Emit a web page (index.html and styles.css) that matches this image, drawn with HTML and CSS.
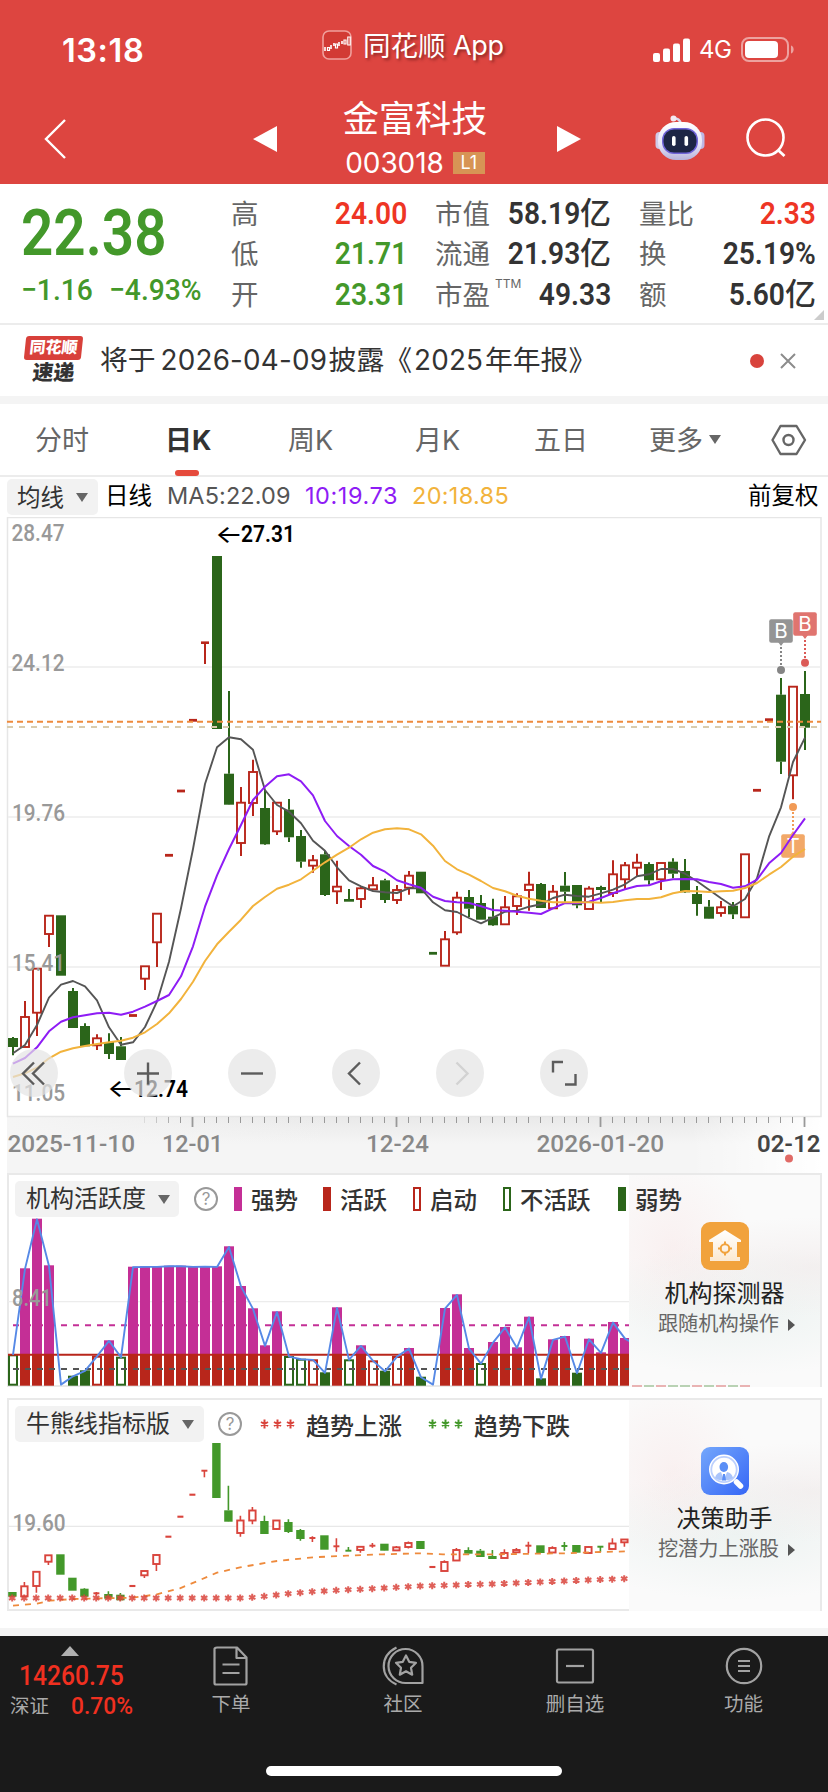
FILE: index.html
```html
<!DOCTYPE html>
<html lang="zh-CN">
<head>
<meta charset="utf-8">
<title>金富科技 003018</title>
<link rel="stylesheet" href="styles.css">
</head>
<body>
<div class="app">
  <header class="top">
    <div class="status">
      <div class="clock">13:18</div>
      <div class="brand">
        <svg width="30" height="30" viewBox="0 0 30 30"><rect x="1" y="1" width="28" height="28" rx="6" fill="#d23a34" stroke="#f0a09c" stroke-width="1.6"/><g stroke="#fff" stroke-width="1.6"><path d="M3 17v4M9 15v4M12 13v3M17 12v4M20 11v3"/></g><g fill="none" stroke="#fff" stroke-width="1.200"><path d="M5.500 17.500h2v3h-2zM13.500 14h2v4h-2zM22 10h2v4h-2zM25.800 7h2.400v8h-2.400z"/></g></svg>
        <span class="brand-cn">同花顺</span><span class="brand-en">App</span>
      </div>
      <div class="signal">
        <svg width="38" height="24" viewBox="0 0 38 24" fill="#fff"><rect x="0" y="15" width="7" height="9" rx="2"/><rect x="10" y="10.500" width="7" height="13.500" rx="2"/><rect x="20" y="5.500" width="7" height="18.500" rx="2"/><rect x="30" y="0.500" width="7" height="23.500" rx="2"/></svg>
        <span class="net">4G</span>
        <svg width="54" height="26" viewBox="0 0 54 26"><rect x="1" y="1" width="46" height="23" rx="7" fill="none" stroke="#eda29f" stroke-width="2"/><rect x="4" y="4" width="33" height="17" rx="4" fill="#fff"/><path d="M50 8.500c3.500 1 3.500 7 0 8z" fill="#eda29f"/></svg>
      </div>
    </div>
    <div class="nav">
      <svg class="back" width="24" height="42" viewBox="0 0 24 42"><path d="M22 2L3 21l19 19" fill="none" stroke="#fff" stroke-width="2.400"/></svg>
      <svg class="prev" width="24" height="26" viewBox="0 0 24 26"><path d="M24 0v26L0 13z" fill="#fff"/></svg>
      <div class="title">
        <div class="name">金富科技</div>
        <div class="code"><span>003018</span><b>L1</b></div>
      </div>
      <svg class="next" width="24" height="26" viewBox="0 0 24 26"><path d="M0 0v26l24-13z" fill="#fff"/></svg>
      <svg class="robot" width="50" height="46" viewBox="0 0 50 46">
        <defs><linearGradient id="rb" x1="0" y1="0" x2="0" y2="1"><stop offset="0" stop-color="#fff"/><stop offset=".6" stop-color="#e6e4f6"/><stop offset="1" stop-color="#b7b3dc"/></linearGradient></defs>
        <path d="M17 3.500q7-1 9 5" fill="none" stroke="#dcd9ee" stroke-width="2.500"/><circle cx="18.500" cy="3.500" r="3" fill="#f3e9f2"/>
        <rect x="0.500" y="17" width="8" height="17" rx="4" fill="#cfcbe9"/><rect x="41.500" y="17" width="8" height="17" rx="4" fill="#bdb7e4"/>
        <rect x="3" y="7" width="44" height="38" rx="18" fill="url(#rb)"/>
        <rect x="7" y="13" width="36" height="26" rx="12" fill="#6f63d8"/><rect x="8.500" y="14.500" width="33" height="23" rx="10.500" fill="#1d2545"/>
        <rect x="17" y="21" width="3.600" height="10" rx="1.800" fill="#fff"/><rect x="29.500" y="21" width="3.600" height="10" rx="1.800" fill="#fff"/>
      </svg>
      <svg class="search" width="44" height="44" viewBox="0 0 44 44"><circle cx="20.500" cy="20.500" r="18" fill="none" stroke="#fff" stroke-width="2.600"/><path d="M33 33l6.500 6" stroke="#fff" stroke-width="2.800"/></svg>
    </div>
  </header>

  <section class="quote">
    <div class="price-col">
      <div class="price"><span class="din">22.38</span></div>
      <div class="change"><span class="din chg">−1.16</span><span class="din pct">−4.93%</span></div>
    </div>
    <dl class="stats s1">
      <dt>高</dt><dd class="up"><span class="din">24.00</span></dd>
      <dt>低</dt><dd class="down"><span class="din">21.71</span></dd>
      <dt>开</dt><dd class="down"><span class="din">23.31</span></dd>
    </dl>
    <dl class="stats s2">
      <dt>市值</dt><dd><span class="din">58.19</span>亿</dd>
      <dt>流通</dt><dd><span class="din">21.93</span>亿</dd>
      <dt>市盈<sup>TTM</sup></dt><dd><span class="din">49.33</span></dd>
    </dl>
    <dl class="stats s3">
      <dt>量比</dt><dd class="up"><span class="din">2.33</span></dd>
      <dt>换</dt><dd><span class="din">25.19%</span></dd>
      <dt>额</dt><dd><span class="din">5.60</span>亿</dd>
    </dl>
    <i class="corner"></i>
  </section>

  <section class="news">
    <div class="express"><span class="ex-top">同花顺</span><span class="ex-bottom">速递</span></div>
    <div class="headline">将于<span class="n1">2026-04-09</span>披露《<span class="n2">2025</span>年年报》</div>
    <i class="dot"></i>
    <svg width="16" height="16" viewBox="0 0 16 16"><path d="M1 1l14 14M15 1L1 15" stroke="#8c8c8c" stroke-width="2"/></svg>
  </section>

  <nav class="tabs">
    <span class="t1">分时</span><span class="t2 on">日K</span><span class="t3">周K</span><span class="t4">月K</span><span class="t5">五日</span><span class="t6">更多<i class="tri"></i></span>
    <svg width="36" height="32" viewBox="0 0 36 32"><path d="M9.500 2h16l8.500 14-8.500 14h-16L1.500 16z" fill="none" stroke="#666" stroke-width="2.400" stroke-linejoin="round"/><circle cx="17.500" cy="16" r="5" fill="none" stroke="#666" stroke-width="2.400"/></svg>
  </nav>

  <div class="ma-row">
    <span class="pick ma-pick">均线<i class="tri"></i></span>
    <span class="period">日线</span>
    <span class="ma5">MA5:22.09</span><span class="ma10">10:19.73</span><span class="ma20">20:18.85</span>
    <span class="adjust">前复权</span>
  </div>

  <svg id="kline" width="828" height="656" viewBox="0 517 828 656"></svg>

  <section class="panel">
    <div class="panel-head">
      <span class="pick p1">机构活跃度<i class="tri"></i></span>
      <span class="help">?</span>
      <span class="lg" style="width:89px"><i class="sw magenta"></i>强势</span>
      <span class="lg" style="width:90px"><i class="sw red"></i>活跃</span>
      <span class="lg" style="width:90px"><i class="sw red-line"></i>启动</span>
      <span class="lg" style="width:115px"><i class="sw green-line"></i>不活跃</span>
      <span class="lg"><i class="sw green"></i>弱势</span>
    </div>
    <svg id="activity" class="plot" width="621" height="169" viewBox="8 1218 621 169"></svg>
    <aside class="promo">
      <svg width="48" height="48" viewBox="0 0 48 48"><defs><linearGradient id="hs" x1="0" y1="0" x2="0" y2="1"><stop offset="0" stop-color="#fff"/><stop offset="1" stop-color="#fbe9d2"/></linearGradient></defs><rect width="48" height="48" rx="9" fill="#f1a23c"/><path d="M24 8l16 10v2h-4v15h3v4H9v-4h3V20H8v-2z" fill="url(#hs)"/><circle cx="24" cy="26.500" r="4.300" fill="none" stroke="#f1a23c" stroke-width="2"/><path d="M24 19.500v3.500M24 30v3.500M17 26.500h3.500M27.500 26.500H31" stroke="#f1a23c" stroke-width="2"/></svg>
      <strong>机构探测器</strong>
      <span>跟随机构操作<i class="go"></i></span>
      <svg class="tails" width="120" height="2" viewBox="0 0 120 2"><g fill="#e9b3b3"><path d="M0 0h10v2H0zM24 0h10v2H24zM60 0h10v2H60zM84 0h10v2H84zM108 0h10v2h-10z"/></g><g fill="#b9d2b4"><path d="M12 0h10v2H12zM36 0h10v2H36zM48 0h10v2H48zM72 0h10v2H72zM96 0h10v2H96z"/></g></svg>
    </aside>
  </section>

  <section class="panel bull">
    <div class="panel-head">
      <span class="pick p2">牛熊线指标版<i class="tri"></i></span>
      <span class="help">?</span>
      <span class="lg trend"><svg class="stars" width="36" height="12" viewBox="0 0 36 12"><g stroke="#d9443c" stroke-width="2"><path d="M4.500 1.500v9M1 4l7 4M8 4L1 8M17.500 1.500v9M14 4l7 4M21 4l-7 4M30.500 1.500v9M27 4l7 4M34 4l-7 4"/></g></svg>趋势上涨</span>
      <span class="lg"><svg class="stars" width="36" height="12" viewBox="0 0 36 12"><g stroke="#43982a" stroke-width="2"><path d="M4.500 1.500v9M1 4l7 4M8 4L1 8M17.500 1.500v9M14 4l7 4M21 4l-7 4M30.500 1.500v9M27 4l7 4M34 4l-7 4"/></g></svg>趋势下跌</span>
    </div>
    <svg id="trend" class="plot" width="621" height="168" viewBox="8 1443 621 168"></svg>
    <aside class="promo">
      <svg width="48" height="48" viewBox="0 0 48 48"><defs><linearGradient id="bl" x1="0" y1="0" x2="1" y2="1"><stop offset="0" stop-color="#74a7fb"/><stop offset="1" stop-color="#3566f6"/></linearGradient></defs><rect width="48" height="48" rx="9" fill="url(#bl)"/><path d="M35.500 35l4 4" stroke="#fff" stroke-width="5.500" stroke-linecap="round"/><circle cx="23" cy="22.500" r="15" fill="#fff"/><circle cx="23" cy="22.500" r="12.700" fill="#fff" stroke="#bcd0fd" stroke-width="1.800"/><ellipse cx="22.800" cy="20" rx="4.300" ry="5" fill="#5b8ff6"/><path d="M14 31q1-5 6-6l3 8q-5 1-9-2zM32 31q-1-5-6-6l-3 8q5 1 9-2z" fill="#a9c4fb"/><path d="M22 27h2l1 6.500h-4z" fill="#5b8ff6"/></svg>
      <strong>决策助手</strong>
      <span>挖潜力上涨股<i class="go"></i></span>
    </aside>
  </section>

  <footer class="bottom">
    <div class="bar">
      <div class="index">
        <i class="uptri"></i>
        <div class="idx-val"><span class="din">14260.75</span></div>
        <div class="idx-row"><span>深证</span><span class="din idx-pct">0.70%</span></div>
      </div>
      <div class="item i1"><svg width="36" height="40" viewBox="0 0 36 40"><path d="M4 1.500h20l9.500 10V37q0 1.500-1.500 1.500H3Q1.500 38.500 1.500 37V3q0-1.500 2.500-1.500zM23.500 1.500v10.500h10M9.500 18.500h17M9.500 27h17"/></svg>下单</div>
      <div class="item i2"><svg width="42" height="40" viewBox="0 0 42 40"><path d="M14.500 1.500C-2.500 10-2.500 31 14.500 38.500M40.500 37V20.500A17 17 0 1 0 24 37zM24 9.500l3.200 6.300 6.800 1-5 4.900 1.200 7L24 25.300l-6.200 3.400 1.200-7-5-4.900 6.800-1z"/></svg>社区</div>
      <div class="item i3"><svg width="40" height="40" viewBox="0 0 40 40"><rect x="2" y="3.500" width="36" height="33" rx="1.500"/><path d="M11 20h18"/></svg>删自选</div>
      <div class="item i4"><svg width="38" height="40" viewBox="0 0 38 40"><circle cx="19" cy="20" r="17.200"/><path d="M13 15h12M13 20h12M13 25h12"/></svg>功能</div>
    </div>
    <i class="home"></i>
  </footer>
</div>
<script src="charts.js"></script>
</body>
</html>
```
FILE: styles.css
```css
* { box-sizing: border-box; }
body { margin: 0; background: #fff; font-family: Inter, "Noto Sans CJK SC", sans-serif; color: #333; }
.app { width: 828px; height: 1792px; display: flex; flex-direction: column; overflow: hidden; }
.app > * { flex: none; }
svg { display: block; flex: none; }
i { font-style: normal; flex: none; }
.din { display: inline-block; font-family: Roboto, sans-serif; font-weight: 600; transform: scaleX(.88); transform-origin: right center; white-space: nowrap; }
.tri { display: inline-block; border: 6.500px solid transparent; border-top: 9px solid #666; border-bottom: 0; }

.top { height: 184px; background: #dd4540; color: #fff; }
.status { height: 92px; display: flex; align-items: flex-start; white-space: nowrap; }
.clock { width: 322px; padding: 31px 0 0 62px; font-size: 32.500px; line-height: 40px; font-weight: 600; letter-spacing: .6px; }
.brand { width: 331px; padding-top: 30px; display: flex; font-size: 27.500px; line-height: 32px; text-shadow: 2px 2px 3px rgba(90,20,20,.6); }
.brand-cn { margin-left: 11px; width: 90px; }
.brand-en { font-size: 27px; letter-spacing: -.3px; }
.signal { display: flex; padding-top: 37px; align-items: center; }
.net { width: 50px; padding-left: 8px; font-size: 24px; line-height: 24px; letter-spacing: -.5px; }
.nav { height: 92px; display: flex; }
.back { margin: 26px 0 0 43px; }
.prev { margin: 34px 0 0 186px; }
.title { width: 276px; margin-right: 4px; text-align: center; }
.name { padding-top: 4px; font-size: 36.200px; line-height: 46px; }
.code { display: flex; justify-content: center; align-items: center; font-size: 28px; line-height: 36px; margin-top: 3px; letter-spacing: -.1px; }
.code b { margin-left: 9px; width: 32px; height: 22px; background: #d79455; font-size: 18px; line-height: 22px; font-weight: 400; }
.next { margin-top: 34px; }
.robot { margin: 23px 0 0 74px; }
.search { margin: 25px 0 0 40px; }

.quote { height: 141px; border-bottom: 2px solid #ececec; display: flex; position: relative; padding-top: 9px; }
.price-col { width: 231px; padding-left: 21px; color: #43982a; }
.price { height: 76px; font-size: 64px; line-height: 77px; }
.price .din { transform-origin: left center; transform: scaleX(.885); }
.change { display: flex; font-size: 30px; line-height: 42px; }
.change .din { transform-origin: left center; transform: scaleX(.94); font-weight: 500; }
.chg { width: 88px; }
.stats { margin: 0; display: grid; grid-template-columns: 56px 1fr; grid-auto-rows: 40.300px; line-height: 40px; white-space: nowrap; }
.stats dt { font-size: 27.500px; color: #666; padding-top: 1px; }
.stats dd { margin: 0; font-size: 31px; text-align: right; font-weight: 500; }
.stats .din { font-size: 32px; }
.stats sup { font-size: 12px; line-height: 12px; vertical-align: 17px; margin-left: 5px; }
.s1 { width: 176px; }
.s2 { width: 176px; margin-left: 28px; }
.s3 { width: 177px; margin-left: 28px; }
.up { color: #ee3524; }
.down { color: #43982a; }
.corner { position: absolute; right: 4px; bottom: 3px; border: solid transparent; border-width: 10px 0 0 10px; border-bottom: 10px solid #ccc; border-top: 0; }

.news { height: 79px; border-bottom: 8px solid #f4f4f4; display: flex; align-items: center; }
.express { margin-left: 25px; width: 75px; font-weight: 900; text-align: center; }
.express span { display: block; width: 57px; transform: skewX(-6deg); white-space: nowrap; }
.ex-top { height: 24px; background: #d8403a; border-radius: 3px; color: #fff; font-size: 16px; line-height: 23px; }
.ex-bottom { font-size: 21px; line-height: 26px; }
.headline { width: 650px; font-size: 27.800px; line-height: 40px; white-space: nowrap; margin-top: -2px; }
.headline span { display: inline-block; letter-spacing: .2px; margin-left: 5px; }
.n1 { width: 168px; }
.n2 { width: 71px; }
.headline .n2 { margin-left: 2px; }
.dot { width: 14px; height: 14px; border-radius: 50%; background: #d8433c; margin-right: 16px; }

.tabs { height: 73px; border-bottom: 2px solid #ececec; display: flex; align-items: center; color: #666; font-size: 27px; position: relative; }
.tabs span { line-height: 73px; height: 72px; white-space: nowrap; }
.t1 { width: 165px; padding-left: 35px; }
.t2 { width: 123px; }
.tabs .on { color: #333; font-weight: 700; position: relative; }
.on::after { content: ""; position: absolute; left: 10px; bottom: 0; width: 24px; height: 6px; border-radius: 3px; background: #e54a3c; }
.t3 { width: 127px; }
.t4 { width: 119px; }
.t5 { width: 115px; }
.t6 { width: 122px; }
.t6 .tri { margin: 0 0 6px 6px; }

.ma-row { height: 40px; display: flex; align-items: center; padding-left: 7px; font-size: 23.500px; color: #000; white-space: nowrap; }
.ma-row > span { line-height: 34px; padding-bottom: 2px; }
.pick { display: flex; align-items: center; height: 36px; background: #f2f2f2; border-radius: 5px; padding-left: 11px; color: #333; line-height: 36px; }
.pick .tri { margin-left: 12px; }
.ma-row .ma-pick { width: 91px; padding: 1px 0 0 10px; line-height: 36px; }
.period { width: 69px; padding-left: 7px; }
.ma5 { width: 138px; color: #555; letter-spacing: .1px; }
.ma10 { width: 107px; color: #8e1cf5; letter-spacing: .55px; }
.ma20 { width: 336px; color: #f2b33c; letter-spacing: .3px; }

.panel { margin-left: 7px; width: 815px; height: 214px; border: 2px solid #e9e9e9; display: grid; grid-template-columns: 621px 1fr; grid-template-rows: 43px 1fr; }
.panel > * { min-width: 0; min-height: 0; }
.bull { margin-top: 11px; height: 213px; margin-bottom: 17px; }
.panel-head { grid-area: 1 / 1 / 2 / 3; z-index: 1; display: flex; align-items: center; padding: 5px 0 0 6px; font-size: 23.500px; white-space: nowrap; }
.panel-head .pick { font-size: 24px; }
.p1 { width: 164px; }
.p2 { width: 189px; }
.help { width: 24px; height: 24px; border: 2px solid #999; border-radius: 50%; margin: 0 16px 0 15px; font-size: 17px; line-height: 20px; text-align: center; color: #999; }
.bull .help { margin: 0 18px 0 14px; }
.lg { display: flex; align-items: center; font-weight: 500; color: #333; }
.sw { width: 8px; height: 24px; margin-right: 9px; }
.magenta { background: #c42f96; }
.red { background: #b8261b; }
.green { background: #2b651a; }
.red-line { border: 2px solid #b8261b; }
.green-line { border: 2px solid #2b651a; }
.stars { margin-right: 10px; }
.trend { width: 168px; }
.bull .lg { font-size: 24px; }
.plot { grid-area: 2 / 1; margin-left: -1px; }
.promo { grid-area: 1 / 2 / 3 / 3; margin-left: -1px; background: radial-gradient(ellipse 80px 90px at 42px 72px, rgba(248,226,226,.4), rgba(248,226,226,0)), radial-gradient(ellipse 170px 50px at 185px 92px, rgba(238,230,230,.5), rgba(238,230,230,0)), radial-gradient(ellipse 180px 65px at 110px 135px, rgba(232,240,238,.7), rgba(232,240,238,0)), #fafafa; display: flex; flex-direction: column; align-items: center; padding-top: 47px; }
.promo strong { font-size: 24px; line-height: 30px; font-weight: 400; color: #222; margin-top: 9px; }
.promo span { font-size: 20.200px; line-height: 28px; color: #666; margin-top: 1px; padding-left: 4px; white-space: nowrap; }
.go { display: inline-block; border: 6px solid transparent; border-left: 7px solid #555; border-right: 0; margin-left: 9px; }
.tails { margin-top: auto; align-self: flex-start; margin-left: 3px; }

.bottom { height: 164px; border-top: 8px solid #f4f4f4; background: #1a1a1a; color: #aaa; display: flex; flex-direction: column; align-items: center; justify-content: space-between; padding-bottom: 16px; }
.bar { width: 828px; display: flex; font-size: 19.500px; white-space: nowrap; }
.index { width: 145px; display: flex; flex-direction: column; align-items: flex-start; padding-top: 10px; }
.uptri { border: 9px solid transparent; border-top: 0; border-bottom: 10px solid #b0b0b0; margin-left: 61px; }
.index .din { color: #f03020; transform-origin: left center; font-weight: 500; }
.idx-val { padding-left: 19px; font-size: 28px; line-height: 38px; height: 38px; }
.idx-row { display: flex; align-items: center; height: 24px; line-height: 24px; padding-left: 10px; }
.idx-row .idx-pct { margin-left: 22px; font-size: 24.500px; line-height: 22px; transform: scaleX(.93); }
.item { width: 172px; display: flex; flex-direction: column; align-items: center; padding-top: 10px; line-height: 28px; }
.item svg { fill: none; stroke: #a2a2a2; stroke-width: 2.200; stroke-linejoin: round; margin-bottom: 4px; }
.i4 { width: 165px; }
.home { width: 296px; height: 10px; border-radius: 5px; background: #fff; }
```
FILE: charts.js
```js
(function () {
  var STEP = 12, RED = '#b8261b', GREEN = '#2b651a';

  // Rows: colour, high, open/close top, open/close bottom, low. One number means a flat day.
  var K = [
    ['g',1037,1038,1047,1055.3],['r',1001,1017,1047,1047],['r',968.7,968.7,1012.7,1036],['r',915.7,915.7,934,947],
    ['g',915.3,915.3,975.7,975.7],['g',988,991,1028,1028],['g',1023.3,1026,1046.3,1046.3],['r',1034.3,1038.3,1045.3,1050],
    ['g',1033.3,1042,1054,1059],['g',1037,1046.3,1060,1060],['r',1015.5],['r',966.3,966.3,978.7,990],
    ['r',913.7,913.7,942.3,967],['r',855.3],['r',791],['r',720.3],
    ['r',642.7,642.7,642.7,664],['g',556,556,729,729],['g',691,773.7,804.7,805],['r',787,802.7,843,856],
    ['r',759.7,772,803,816],['g',790,808,844.3,845],['r',802.7,802.7,831.3,835],['g',799,809.7,837.3,842],
    ['g',830,836,861.7,867.7],['r',855,860.3,865.7,872.7],['g',851,854.3,895,896],['r',860.7,886.7,891.3,904],
    ['g',889,899,901.7,901.7],['r',886.7,888.3,899,908],['r',877,885.3,889.3,890],['g',878.7,880.3,900,903],
    ['r',885,890,900,904],['r',871,875.7,887.7,894.7],['g',871.7,871.7,893.3,893.3],['g',953.3],
    ['r',931,939.3,965.7,965.7],['r',891.7,897.7,932.3,934.7],['g',890,897,908.7,917],['g',895,903,919.7,919.7],
    ['g',898.7,916.7,925.3,926],['r',896,907.3,924.3,924.3],['r',893.3,896.3,906,915],['r',871.7,884.7,890,910.7],
    ['g',883,884,908,908],['r',885,891.7,908.3,908.3],['g',872,885.7,891.7,901.7],['g',885,885,905.3,908.3],
    ['r',886.3,888.7,909,909],['g',885.7,887,890,903],['r',860.3,874.3,893,897],['r',862,865.3,879.3,889.7],
    ['r',853.7,862.7,867.7,876.7],['g',862.3,864,880.3,884.7],['r',863,863,879.3,890],['g',858.3,861.7,873.7,878.3],
    ['g',859,871,892.3,893],['g',886,894,904,915.7],['g',900,906.7,918.7,919],['r',901,907.3,913,916.7],
    ['g',902,905.7,914.3,919],['r',854.3,854.3,917.3,917.3],['r',790.3],['r',719.7],
    ['g',678,694.7,761.7,774],['r',686.7,686.7,775.3,799.3],['g',671,694,727.7,750]
  ];
  var MA5 = [1053.3,1045,1025,997.7,984.7,981,986.3,1000.3,1027.3,1044.7,1042.3,1027,1001.7,961.7,908.3,849,784,747.3,737.3,739.3,749.7,790,805,811.7,823.3,840.7,850.7,867.3,880.3,886.3,891,892.3,893,888.3,888.3,902.3,910.3,912,918,923.3,917.7,911.7,910.7,906.7,904.3,898,894.7,896,896.7,893.3,889.7,884.3,876.3,874.3,869,869,873.7,881.3,889.7,898.3,906.3,899,878.3,836.7,807.3,762,737.7];
  var MA10 = [1063.7,1058,1047.3,1031.3,1021.7,1017.3,1015.3,1013.3,1012.7,1014.7,1011.7,1006.7,1001,995,976.3,946.3,906.7,875.3,849,825,800,786.7,776.3,774.3,781.3,795.3,821,836,846,854.7,866,871.7,880.3,884.3,887.7,896.7,901,902.3,903,906.3,910,910.7,911.7,912.7,914,908.3,903,903.3,901.7,898,893.3,889.3,886,885.3,881.3,879.3,879,879.3,882,884,887.7,886.3,879.7,863.3,853,835,818.3];
  var MA20 = [1077,1073.3,1067.7,1058.3,1051.7,1048.3,1046,1044,1042.3,1040.7,1037.7,1032.3,1024,1013.3,999,981.7,961,944.3,931.7,919.7,906,897,888.7,884.7,879.3,870.7,862.3,854.7,847.7,839.3,832.7,829.3,828.3,829.3,834.3,845.7,861,869.3,874.7,881,888,891.3,895.7,898.7,900.7,902.3,902.3,902.3,902.3,902.7,902,900.3,899,899,897.3,893.3,891,891.3,892,891.3,890.7,888,883,874.7,867,856.7,849];

  function candles(rows, x0, w, dash, red, green) {
    return rows.map(function (r, i) {
      var x = x0 + STEP * i, c = r[0] === 'g' ? green : red, h = w / 2;
      if (r.length === 2) return '<rect x="' + (x - 4 * dash) + '" y="' + (r[1] - 1.4 * dash) + '" width="' + 8 * dash + '" height="' + 2.8 * dash + '" fill="' + c + '"/>';
      var o = '<path d="M' + x + ' ' + r[1] + 'V' + r[2] + 'M' + x + ' ' + r[3] + 'V' + r[4] + '" stroke="' + c + '" stroke-width="' + (dash < 1 ? 1.6 : 2) + '"/>';
      if (r[3] - r[2] < 1) return o + '<rect x="' + (x - 4 * dash) + '" y="' + (r[2] - 1.3 * dash) + '" width="' + 8 * dash + '" height="' + 2.6 * dash + '" fill="' + c + '"/>';
      if (r[0] === 'g') return o + '<rect x="' + (x - h) + '" y="' + r[2] + '" width="' + w + '" height="' + (r[3] - r[2]) + '" fill="' + c + '"/>';
      return o + '<rect x="' + (x - h + 1) + '" y="' + r[2] + '" width="' + (w - 2) + '" height="' + (r[3] - r[2]) + '" fill="#fff" stroke="' + c + '" stroke-width="1.9"/>';
    }).join('');
  }
  function line(v, x0, c, w) {
    return '<polyline points="' + v.map(function (y, i) { return (x0 + STEP * i) + ',' + y; }).join(' ') + '" fill="none" stroke="' + c + '" stroke-width="' + w + '" stroke-linejoin="round"/>';
  }
  function text(s, x, y, size, len, fill, weight) {
    return '<text x="' + x + '" y="' + y + '" font-family="Roboto, sans-serif" font-weight="' + (weight || 500) + '" font-size="' + size + '" fill="' + fill + '" textLength="' + len + '" lengthAdjust="spacingAndGlyphs">' + s + '</text>';
  }
  function rule(x1, x2, y, c, w, dash) {
    return '<path d="M' + x1 + ' ' + y + 'H' + x2 + '" stroke="' + c + '" stroke-width="' + w + '"' + (dash ? ' stroke-dasharray="' + dash + '"' : '') + ' fill="none"/>';
  }

  // Daily candles
  var s = '<defs><linearGradient id="ax" x1="0" y1="0" x2="0" y2="1"><stop offset="0" stop-color="#e9e9e9"/><stop offset=".5" stop-color="#f5f5f5"/></linearGradient>' +
    '<linearGradient id="fl" x1="0" x2="1" y1="0" y2="0"><stop offset="0" stop-color="#f5f5f5"/><stop offset=".4" stop-color="#f5f5f5" stop-opacity="0"/></linearGradient>' +
    '<linearGradient id="fr" x1="0" x2="1" y1="0" y2="0"><stop offset="0" stop-color="#fff" stop-opacity="0"/><stop offset="1" stop-color="#fff"/></linearGradient></defs>';
  s += '<rect x="7" y="1116" width="815" height="57" fill="url(#ax)"/><rect x="7" y="1116" width="815" height="57" fill="url(#fl)"/><rect x="690" y="1116" width="132" height="57" fill="url(#fr)"/>';
  s += '<rect x="7.500" y="517.500" width="813.500" height="599" fill="#fff" stroke="#e6e6e6" stroke-width="1.500"/>';
  [667, 817, 967].forEach(function (y) { s += rule(8, 821, y, '#ececec', 1.5); });
  s += candles(K, 13, 10, 1, RED, GREEN);
  s += rule(7, 821, 721.7, '#ee8a3c', 2, '6 4') + rule(7, 821, 727, '#d9ccae', 1.8, '6 6');
  s += text('28.47', 11.5, 541, 24.5, 53, '#999') + text('24.12', 11.5, 671, 24.5, 53, '#999') + text('19.76', 12, 821, 24.5, 53, '#999') + text('15.41', 12, 971, 24.5, 53, '#999') + text('11.05', 12, 1101, 24.5, 53, '#999');
  function arrow(x, y) { return '<text x="' + x + '" y="' + y + '" font-family="Inter, sans-serif" font-size="25" fill="#000" textLength="28" lengthAdjust="spacingAndGlyphs">←</text>'; }
  s += arrow(215, 542.5) + text('27.31', 241, 542.3, 23.7, 54, '#000', 600) + arrow(107, 1097) + text('12.74', 134, 1096.9, 23.7, 54, '#000', 600);
  function badge(x, y, c, ch, dotY, dotC) {
    var below = dotY > y;
    return '<path d="M' + x + ' ' + (below ? y + 12 : y - 12) + 'V' + dotY + '" stroke="' + dotC + '" stroke-width="2" stroke-dasharray="2 2"/><circle cx="' + x + '" cy="' + dotY + '" r="4" fill="' + dotC + '"/>' +
      '<path d="M' + (x - 3) + ' ' + (below ? y + 11 : y - 11) + 'h6l-3 ' + (below ? 4 : -4) + 'z" fill="' + c + '"/><rect x="' + (x - 11.8) + '" y="' + (y - 11.8) + '" width="23.6" height="23.6" rx="2" fill="' + c + '"/>' +
      '<text x="' + x + '" y="' + (y + 7.3) + '" text-anchor="middle" font-family="Inter, sans-serif" font-size="20.500" fill="#fff">' + ch + '</text>';
  }
  s += badge(781, 631, '#949494', 'B', 670, '#858585') + badge(805, 624, '#e0746f', 'B', 662.7, '#db5a56') + badge(793, 846, '#f2a868', 'T', 807, '#f19a55');
  s += line(MA5, 13, '#555', 1.9) + line(MA10, 13, '#8e1cf5', 2) + line(MA20, 13, '#f2b33c', 2);
  [34, 148, 252, 356, 460, 564].forEach(function (x, i) {
    var d = ['M34 1062.500l-11 11 11 11M44 1062.500l-11 11 11 11', 'M137 1073.500h22M148 1062.500v22', 'M241 1073.500h22', 'M360 1062.500l-11 11 11 11', 'M456.500 1062.500l11 11-11 11', 'M563 1062h-10v10.500M565 1084.500h10.500v-10.500'][i];
    s += '<circle cx="' + x + '" cy="1073" r="24" fill="#e4e4e4" fill-opacity=".7"/><path d="' + d + '" fill="none" stroke="' + (i === 4 ? '#d2d2d2' : '#5c5c5c') + '" stroke-width="2.400"/>';
  });
  for (var i = 11; i <= 66; i++) {
    var big = (i - 15) % 17 === 0;
    s += '<path d="M' + (12.5 + STEP * i) + ' 1117v' + (big ? 10 : 6) + '" stroke="#999" stroke-opacity="' + Math.min(1, (i - 10) / 4) + '" stroke-width="' + (big ? 1.8 : 1) + '"/>';
  }
  s += text('2025-11-10', 7.5, 1152.3, 23.5, 127.5, '#888') + text('12-01', 162, 1152.3, 23.5, 61, '#888') + text('12-24', 366, 1152.3, 23.5, 63, '#888') + text('2026-01-20', 536.5, 1152.3, 23.5, 127.5, '#888') + text('02-12', 757, 1152.3, 23.5, 63.5, '#444', 600);
  s += '<circle cx="789" cy="1158.500" r="4" fill="#e06a66"/>';
  document.getElementById('kline').innerHTML = s;

  // Institutional activity: m strong, g weak, G inactive, R starting, n none
  var A = [['G',1354.3],['m',1268.3],['m',1218.7],['m',1265.3],['n',1384],['g',1375.7],['g',1370.3],['R',1355.7],['m',1340.3],['G',1356.7],
    ['m',1266.7],['m',1266.3],['m',1266.3],['m',1265.7],['m',1265.7],['m',1266.3],['m',1266],['m',1266.3],['m',1246.3],['m',1286],['m',1308.3],['m',1345.3],['m',1311.3],
    ['G',1356],['G',1358.7],['R',1359.3],['g',1372.3],['m',1307.3],['G',1359.3],['m',1345.3],['R',1360.3],['g',1370.7],['R',1356],['m',1348],['g',1376.7],['n',1384],
    ['m',1308],['m',1294.3],['m',1348],['G',1363],['m',1342],['m',1327],['m',1347.3],['m',1316.7],['g',1378.3],['m',1339.3],['m',1336],['g',1372.7],['m',1338.7],['m',1352.3],['m',1322],['m',1338],['m',1345]];
  s = rule(8, 629, 1301.7, '#ececec', 1.2) + rule(13, 629, 1325.3, '#c42f96', 2, '6 6');
  A.forEach(function (a, i) {
    var x = 8 + STEP * i, y = a[1];
    if (a[0] === 'm') s += '<rect x="' + x + '" y="' + y + '" width="10" height="' + (1354.7 - y) + '" fill="#c42f96"/><rect x="' + x + '" y="1354.700" width="10" height="31" fill="' + RED + '"/>';
    else if (a[0] === 'g') s += '<rect x="' + x + '" y="' + y + '" width="10" height="' + (1385.7 - y) + '" fill="' + GREEN + '"/>';
    else if (a[0] !== 'n') s += '<rect x="' + (x + 1) + '" y="' + (y + 1) + '" width="8" height="' + (1383.7 - y) + '" fill="#fff" stroke="' + (a[0] === 'G' ? GREEN : RED) + '" stroke-width="2"/>';
  });
  s += rule(8, 629, 1354.7, RED, 2) + rule(13, 629, 1369, '#555', 2, '6 6');
  s += line(A.map(function (a) { return a[1] + .6; }), 13, '#5689e6', 1.9) + text('8.41', 12, 1305.5, 24.5, 40, '#999');
  document.getElementById('activity').innerHTML = s;

  // Bull / bear line
  var T = [['g',1592,1592,1596.7,1597],['r',1582,1586.3,1596.3,1597],['r',1571.3,1571.8,1586,1592.7],['r',1555,1555.3,1561.7,1565],['g',1554.3,1554.3,1574.7,1574.7],['g',1577.7,1577.7,1590.7,1590.7],['g',1588,1588.7,1596.7,1597],
    ['r',1592,1593.3,1593.3,1595.5],['g',1591.3,1594,1598.7,1599],['g',1593,1594.7,1600.3,1601],['r',1586],['r',1570.7,1571,1575.3,1578],['r',1554.3,1555,1564,1571],['r',1536.7],['r',1516.7],['r',1494.7],
    ['r',1470.7,1470.7,1470.7,1477.3],['g',1443,1443,1498,1498],['g',1485.7,1510.3,1521.7,1522],['r',1515.7,1520.5,1533,1536.7],['r',1507,1510.5,1520.5,1524.3],['g',1515.7,1521,1534,1534],['r',1520,1520.5,1529,1530],['g',1519.3,1522,1532,1533],
    ['g',1529,1530,1539,1540.7],['r',1536.3,1538,1538,1542],['g',1535.3,1535.3,1549.7,1549.7],['r',1538.3,1546.3,1546.3,1551.7],['g',1547,1550.7,1550.7,1550.7],['r',1546.3,1546.8,1550,1552.7],['r',1543,1545.7,1545.7,1547.7],['g',1543.7,1543.7,1550.7,1551],
    ['r',1546,1547.3,1550.4,1551],['r',1541.5,1543,1547,1548.5],['g',1541,1541,1549,1549],['r',1567],['r',1560.3,1562,1571,1571],['r',1548,1550,1560.5,1561],['g',1547.3,1550,1553.7,1555],['g',1549,1550.7,1557,1557],
    ['g',1550,1556,1559,1559],['r',1549.3,1553,1558,1558],['r',1548,1550,1552.3,1552.5],['r',1541.7,1545.7,1545.7,1553.3],['g',1545.3,1545.3,1553,1553],['r',1546.3,1548,1552.5,1553],['g',1542,1546,1546,1550.7],['g',1545,1545,1552.7,1553],
    ['r',1546.3,1547,1553,1553],['g',1546,1546.7,1546.7,1552.3],['r',1538.3,1543.5,1549,1549],['r',1539,1539.5,1542.3,1546.7]];
  s = rule(8, 629, 1526.3, '#e8e8e8', 1.2);
  s += candles(T, 12.4, 8.4, .75, '#d9443c', '#43982a');
  s += '<polyline points="13,1605.700 37,1603.700 50,1600.700 73,1599 100,1598.300 133,1597.700 157,1594.300 180,1588.300 200,1580 217,1572.700 240,1567.300 277,1561 313,1557.300 347,1555.700 383,1554.300 420,1553.300 443,1554.300 500,1554.300 533,1553.700 567,1553.300 600,1552 629,1551.300" fill="none" stroke="#ee8a3c" stroke-width="1.800" stroke-dasharray="6 6"/>';
  var S = []; for (i = 0; i < 20; i++) S.push(1598);
  S = S.concat([1597.3,1596.3,1595,1593.7,1592.7,1591.7,1591,1590.3,1589.7,1589.3,1588.7,1588,1587.3,1586.7,1586,1585.7,1585.3,1585,1584.5,1584.3,1584,1583.5,1583,1582.5,1582,1581.5,1581,1580.5,1580,1579.6,1579.2,1578.7]);
  S.forEach(function (y, i) {
    var x = 12.2 + STEP * i;
    s += '<path d="M' + x + ' ' + (y - 3.5) + 'v7M' + (x - 3.2) + ' ' + (y - 1.8) + 'l6.400 3.600M' + (x + 3.2) + ' ' + (y - 1.8) + 'l-6.400 3.600" stroke="#d9443c" stroke-opacity=".85" stroke-width="2"/>';
  });
  s += text('19.60', 12.5, 1530.5, 24.5, 53, '#999');
  document.getElementById('trend').innerHTML = s;
})();
```
